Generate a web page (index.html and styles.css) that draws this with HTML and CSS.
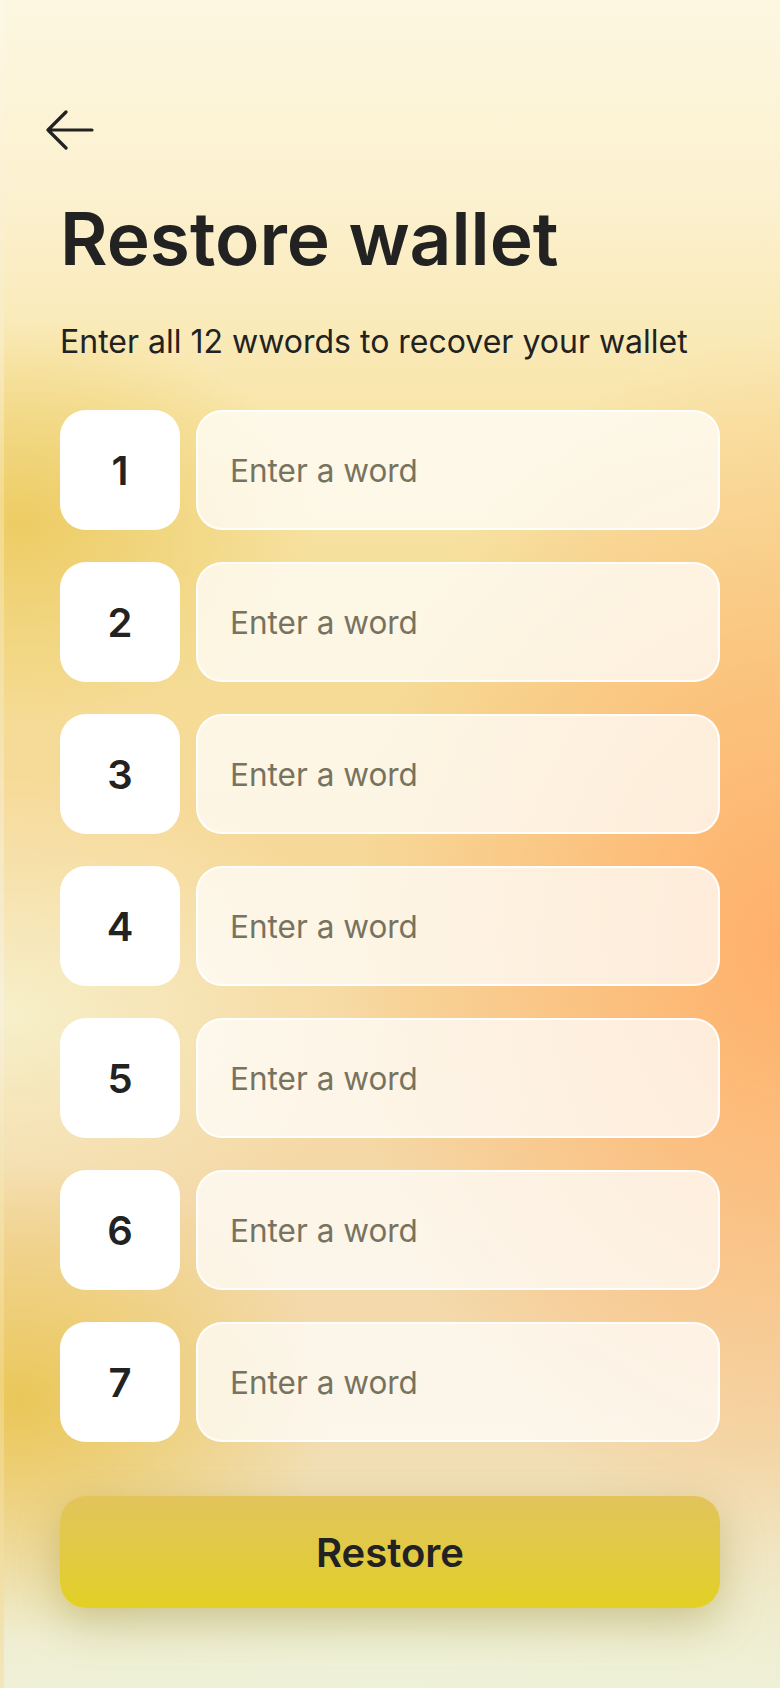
FILE: index.html
```html
<!DOCTYPE html>
<html lang="en">
<head>
<meta charset="utf-8">
<title>Restore wallet</title>
<link rel="stylesheet" href="styles.css">
</head>
<body>
<div class="screen">
  <button class="back" aria-label="Back">
    <svg width="48" height="48" viewBox="0 0 48 48" fill="none" stroke="#222" stroke-width="3.2" stroke-linecap="round" stroke-linejoin="round">
      <path d="M2 24 H46 M20 6 L2 24 L20 42"/>
    </svg>
  </button>
  <h1 class="title">Restore wallet</h1>
  <p class="subtitle">Enter all 12 wwords to recover your wallet</p>
  <div class="words">
    <div class="row"><div class="num">1</div><input class="word" type="text" placeholder="Enter a word"></div>
    <div class="row"><div class="num">2</div><input class="word" type="text" placeholder="Enter a word"></div>
    <div class="row"><div class="num">3</div><input class="word" type="text" placeholder="Enter a word"></div>
    <div class="row"><div class="num">4</div><input class="word" type="text" placeholder="Enter a word"></div>
    <div class="row"><div class="num">5</div><input class="word" type="text" placeholder="Enter a word"></div>
    <div class="row"><div class="num">6</div><input class="word" type="text" placeholder="Enter a word"></div>
    <div class="row"><div class="num">7</div><input class="word" type="text" placeholder="Enter a word"></div>
  </div>
  <button class="restore">Restore</button>
</div>
</body>
</html>
```
FILE: styles.css
```css
html, body {
  margin: 0;
  padding: 0;
}
body {
  width: 780px;
  height: 1688px;
  overflow: hidden;
  font-family: Inter, "Noto Sans", sans-serif;
  color: #222;
  background: linear-gradient(180deg, #fdf8e6 0%, #f9ecc4 20%, #f3d98a 30%, #f6eccf 55%, #f8f1da 60%, #f0d27c 82%, #f3e6bc 100%);
}
.screen {
  box-sizing: border-box;
  margin-left: 4px;
  width: 776px;
  height: 1688px;
  padding: 106px 60px 0 56px;
  display: flex;
  flex-direction: column;
  background:
    radial-gradient(ellipse 38% 12% at 2% 31%, rgba(236, 203, 96, 0.95), rgba(236, 203, 96, 0) 100%),
    radial-gradient(ellipse 40% 14% at 2% 83%, rgba(234, 198, 84, 0.95), rgba(234, 198, 84, 0) 100%),
    radial-gradient(ellipse 55% 36% at 100% 56%, rgba(255, 176, 106, 1), rgba(255, 176, 106, 0) 100%),
    radial-gradient(ellipse 50% 14% at 0% 60%, rgba(246, 242, 206, 0.9), rgba(246, 242, 206, 0) 100%),
    radial-gradient(ellipse 70% 10% at 50% 100%, rgba(238, 242, 216, 1), rgba(238, 242, 216, 0) 100%),
    linear-gradient(180deg, #fdf7e1 0%, #fcf1cf 12%, #f8e5a8 25%, #f5dc96 40%, #f7d79a 55%, #f4d8a8 72%, #f2dcb0 85%, #eef0d6 100%);
}
.back {
  display: block;
  width: 48px;
  height: 48px;
  padding: 0;
  margin: 0 0 0 -14px;
  border: none;
  background: none;
}
.back svg {
  display: block;
}
.title {
  margin: 42px 0 0 0;
  font-size: 73px;
  line-height: 86px;
  font-weight: 600;
  color: #222;
}
.subtitle {
  margin: 40px 0 0 0;
  font-size: 32px;
  line-height: 39px;
  font-weight: 400;
  color: #222;
}
.words {
  margin-top: 49px;
  display: flex;
  flex-direction: column;
  gap: 32px;
}
.row {
  display: flex;
  gap: 16px;
  height: 120px;
}
.num {
  flex: 0 0 120px;
  height: 120px;
  border-radius: 26px;
  background: #fff;
  display: flex;
  align-items: center;
  justify-content: center;
  font-size: 40px;
  font-weight: 600;
  color: #222;
}
.word {
  flex: 1;
  min-width: 0;
  box-sizing: border-box;
  height: 120px;
  margin: 0;
  border: 2px solid rgba(255, 255, 255, 0.9);
  border-radius: 26px;
  background: rgba(255, 255, 255, 0.74);
  padding: 0 0 0 32px;
  font-family: Inter, "Noto Sans", sans-serif;
  font-size: 31.5px;
  color: #222;
  outline: none;
}
.word::placeholder {
  color: #77735f;
}
.restore {
  margin-top: 54px;
  height: 112px;
  width: 100%;
  border: none;
  border-radius: 26px;
  background: linear-gradient(180deg, #e2c45c 0%, #e1cb3e 60%, #e2d024 100%);
  box-shadow: 0 14px 44px rgba(150, 135, 40, 0.4);
  font-family: Inter, "Noto Sans", sans-serif;
  font-size: 40px;
  font-weight: 600;
  color: #222;
}
```
